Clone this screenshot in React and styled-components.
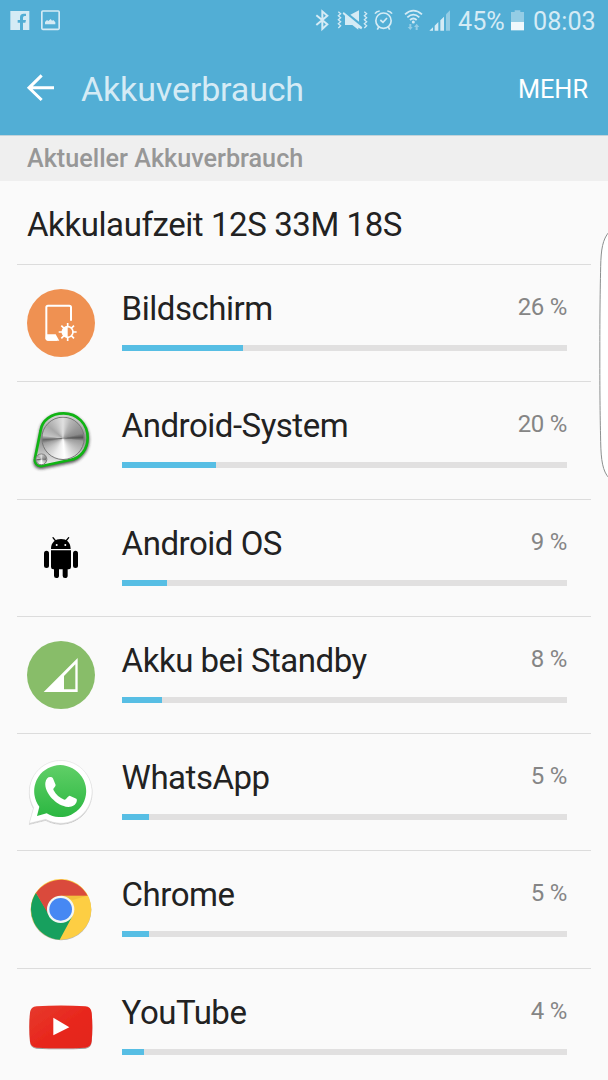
import React from 'react'
import styled, { createGlobalStyle } from 'styled-components'

const rows = [
  { name: 'Bildschirm', percent: 26, bar: 27.1, icon: <DisplayIcon /> },
  { name: 'Android-System', percent: 20, bar: 21.1, icon: <SystemIcon /> },
  { name: 'Android OS', percent: 9, bar: 10.1, icon: <AndroidIcon /> },
  { name: 'Akku bei Standby', percent: 8, bar: 9.1, icon: <StandbyIcon /> },
  { name: 'WhatsApp', percent: 5, bar: 6.1, icon: <WhatsAppIcon /> },
  { name: 'Chrome', percent: 5, bar: 6.1, icon: <ChromeIcon /> },
  { name: 'YouTube', percent: 4, bar: 5.05, icon: <YouTubeIcon /> },
]

export default function App() {
  return (
    <Screen>
      <GlobalStyle />
      <Header>
        <StatusBar>
          <StatusGroup>
            <Glyph $w={20} viewBox="30 24 60 72">
              <path
                d="M31 33H88V90H31ZM60 90H69V68H76L78 60H69V53Q69 48 74 48H78V41H71Q60 41 60 52V60H53V68H60Z"
                fillRule="evenodd"
              />
            </Glyph>
            <Glyph $w={20} $gap={11} viewBox="123 24 60 72">
              <rect x="125.500" y="33" width="52" height="55" rx="3" fill="none" stroke="#d5ebf5" strokeWidth="5" />
              <path d="M135 73V66L141 60L145 63L152 57L156 62L160 60L166 67V73Z" />
            </Glyph>
          </StatusGroup>
          <StatusGroup>
            <Glyph $w={15} viewBox="45 24 45 72">
              <path d="M49 46L82 73L67 87V34L82 47L49 75" fill="none" stroke="#d5ebf5" strokeWidth="6" />
            </Glyph>
            <Glyph $w={33} $gap={6} viewBox="108 24 99 72">
              <path
                d="M115 35L122 41L115 47L122 53L115 59L122 65L115 71L122 77L115 84M193 35L200 41L193 47L200 53L193 59L200 65L193 71L200 77L193 84"
                fill="none" stroke="#d5ebf5" strokeWidth="3.800"
              />
              <path d="M131 36L187 82L184 88L175 83V89L157 75H135V47L128 41ZM151 44L177 31V65Z" />
            </Glyph>
            <Glyph $w={21} $gap={4} viewBox="219 24 63 72">
              <circle cx="250.500" cy="62" r="23" fill="none" stroke="#d5ebf5" strokeWidth="5" />
              <path
                d="M241 60L249 67L261 54M225 41Q229 34 239 33M276 41Q272 34 262 33M236 81L232 89M265 81L269 89"
                fill="none" stroke="#d5ebf5" strokeWidth="5"
              />
            </Glyph>
            <Glyph $w={21} $gap={9} viewBox="309 24 63 72">
              <path d="M315 43Q340 21 366 43M322 52Q340 36 358 52M330 60Q340 51 350 60" fill="none" stroke="#d5ebf5" strokeWidth="5.500" />
              <circle cx="340" cy="66" r="4.500" />
              <path d="M328 72H334V81H338L331 90L323 81H328ZM347 90V81H342L350 71L358 81H353V90Z" opacity="0.5" />
            </Glyph>
            <Glyph $w={24} $gap={4} viewBox="384 24 72 72">
              <path d="M388 92L399 82V92ZM404 77L415 66V92H404ZM421 61L432 50V92H421Z" />
              <path d="M438 43L450 31V92H438Z" opacity="0.5" />
            </Glyph>
            <StatusText $w={48} $gap={6}>45%</StatusText>
            <Glyph $w={17} $gap={3} viewBox="627 24 51 72">
              <path d="M633 36H644V31H661V36H672V66H633Z" opacity="0.5" />
              <path d="M633 66H672V91H633Z" fill="#f0f8fc" />
            </Glyph>
            <StatusText $w={63} $gap={7}>08:03</StatusText>
          </StatusGroup>
        </StatusBar>
        <AppBar>
          <BackIcon viewBox="78 216 90 90">
            <path d="M162 263.500H86M125 226L87 263.500L125 300" fill="none" stroke="#fff" strokeWidth="9" />
          </BackIcon>
          <Title>Akkuverbrauch</Title>
          <MoreButton>MEHR</MoreButton>
        </AppBar>
      </Header>
      <SectionTitle>Aktueller Akkuverbrauch</SectionTitle>
      <Runtime>Akkulaufzeit 12S 33M 18S</Runtime>
      <List>
        {rows.map((row) => (
          <Row key={row.name}>
            {row.icon}
            <Usage>
              <Labels>
                <Name>{row.name}</Name>
                <Percent>{row.percent} %</Percent>
              </Labels>
              <Track>
                <Fill style={{ width: `${row.bar}%` }} />
              </Track>
            </Usage>
          </Row>
        ))}
      </List>
      <EdgeHandle viewBox="327 30 27 750">
        <path
          d="M357 36C338 58 333 88 332 140C330 240 329.500 290 329.500 405C329.500 520 330 570 332 665C333 720 338 754 357 774"
          fill="#fff" stroke="#8c8f8f" strokeWidth="3"
        />
      </EdgeHandle>
    </Screen>
  )
}

function DisplayIcon() {
  return (
    <AppIcon viewBox="51 58 204 204">
      <circle cx="153" cy="160" r="102" fill="#ef9152" />
      <path d="M183 153V113Q183 108 178 108H114Q109 108 109 113V205Q109 210 114 210H141" fill="none" stroke="#fff" strokeWidth="6" />
      <path d="M108 194H137L148 213H114Q107 213 107 206Z" fill="#fff" />
      <path
        d="M173 160V214M146 187H200M154 168L192 206M192 168L154 206"
        stroke="#fff" strokeWidth="5"
      />
      <circle cx="173" cy="187" r="16" fill="#ef9152" stroke="#fff" strokeWidth="5" />
      <path d="M173 171A16 16 0 0 0 173 203Z" fill="#fff" />
    </AppIcon>
  )
}

function SystemIcon() {
  return (
    <AppIcon viewBox="51 50 204 204">
      <defs>
        <filter id="systemShadow" x="-20%" y="-20%" width="140%" height="140%">
          <feGaussianBlur stdDeviation="4.500" />
        </filter>
        <linearGradient id="systemPlate" x1="0" y1="0" x2="0" y2="1">
          <stop offset="0" stopColor="#d9d9d9" />
          <stop offset="0.5" stopColor="#8d8d8d" />
          <stop offset="1" stopColor="#f4f4f4" />
        </linearGradient>
      </defs>
      <path d="M88 123C92 90 123 67 161 67C204 67 238 102 238 145C238 182 214 211 180 217L96 234C79 236 67 222 71 207Z" transform="translate(0 5)" fill="#222" opacity="0.75" filter="url(#systemShadow)" />
      <path
        d="M92 123C96 93 124 72 161 72C202 72 233 104 233 145C233 180 211 207 180 212L96 230C82 232 72 220 75 207Z"
        fill="url(#systemPlate)" stroke="#10b414" strokeWidth="8" strokeLinejoin="round"
      />
      <foreignObject x="94" y="82" width="132" height="132">
        <Knob $size={130} />
      </foreignObject>
      <foreignObject x="76" y="192" width="38" height="38">
        <Knob $size={36} />
      </foreignObject>
    </AppIcon>
  )
}

function AndroidIcon() {
  return (
    <AppIcon viewBox="51 42 204 204">
      <path d="M123 117C123 97 136 87 153 87C170 87 182 97 182 117ZM123 121H183V171Q183 178 176 178H173V197Q173 204 165 204Q158 204 158 197V178H147V197Q147 204 139 204Q132 204 132 197V178H130Q123 178 123 171Z" />
      <rect x="102" y="122" width="15" height="52" rx="7.500" />
      <rect x="189" y="122" width="15" height="52" rx="7.500" />
      <path d="M137 93L129 83M168 93L176 83" stroke="#000" strokeWidth="4" strokeLinecap="round" />
      <circle cx="140" cy="105" r="3" fill="#fff" />
      <circle cx="166" cy="105" r="3" fill="#fff" />
    </AppIcon>
  )
}

function StandbyIcon() {
  return (
    <AppIcon viewBox="51 48 204 204">
      <circle cx="153" cy="150" r="102" fill="#88bd69" />
      <path d="M203 99V201H101ZM196 118L162 153V193H196Z" fill="#fff" fillRule="evenodd" />
    </AppIcon>
  )
}

function WhatsAppIcon() {
  return (
    <AppIcon viewBox="51 39 204 204">
      <defs>
        <linearGradient id="whatsapp" x1="0" y1="0" x2="0" y2="1">
          <stop offset="0" stopColor="#60cf67" />
          <stop offset="1" stopColor="#2bb741" />
        </linearGradient>
        <filter id="softShadow" x="-15%" y="-15%" width="130%" height="130%">
          <feDropShadow dx="0" dy="2" stdDeviation="1.500" floodOpacity="0.4" />
        </filter>
      </defs>
      <path d="M58 235L71 188A94 94 0 1 1 107 223Z" fill="#fff" stroke="#dedede" strokeWidth="1.500" filter="url(#softShadow)" />
      <path d="M81 213L88 185A78 78 0 1 1 110 205Z" fill="url(#whatsapp)" />
      <path
        d="M106 113C108 102 113 96 121 96C126 95 129 98 130 103L137 120C137 125 129 130 130 134C138 149 149 158 163 164C168 165 174 152 179 152L199 161C203 165 199 176 192 181C182 188 170 187 159 182C134 174 103 142 106 113Z"
        fill="#fff"
      />
    </AppIcon>
  )
}

function ChromeIcon() {
  return (
    <AppIcon viewBox="51 46 204 204">
      <circle cx="153" cy="151" r="91" fill="#777" opacity="0.5" />
      <circle cx="153" cy="149" r="91" fill="#fdce43" />
      <path d="M78 99A91 91 0 0 0 149 240L187 170L153 149L118 165Z" fill="#17a05e" />
      <path d="M78 100A91 91 0 0 1 233 108H153L116 165Z" fill="#da4a3c" />
      <path d="M153 108H231L188 121Z" fill="#e0ad34" opacity="0.4" />
      <circle cx="152" cy="149" r="41" fill="#f3f6f3" />
      <circle cx="152" cy="149" r="34" fill="#4688f3" />
    </AppIcon>
  )
}

function YouTubeIcon() {
  return (
    <AppIcon viewBox="51 39 204 204">
      <defs>
        <linearGradient id="youtube" x1="0" y1="0" x2="1" y2="1">
          <stop offset="0" stopColor="#e63a2d" />
          <stop offset="0.5" stopColor="#e8281e" />
          <stop offset="1" stopColor="#e3241d" />
        </linearGradient>
        <filter id="youtubeShadow" x="-10%" y="-10%" width="120%" height="130%">
          <feDropShadow dx="0" dy="3" stdDeviation="2" floodOpacity="0.4" />
        </filter>
      </defs>
      <path
        d="M80 79Q153 74 226 79Q243 80 245 98Q249 141 245 184Q243 202 226 203Q153 207 80 203Q62 202 60 184Q56 141 60 98Q62 80 80 79Z"
        fill="url(#youtube)" filter="url(#youtubeShadow)"
      />
      <path d="M130 113L178 142L130 166Z" fill="#fff" />
    </AppIcon>
  )
}

const GlobalStyle = createGlobalStyle`
  body {
    margin: 0;
    background: #fafafa;
  }
  * {
    box-sizing: border-box;
  }
`;

const Screen = styled.div`
  position: relative;
  width: 608px;
  height: 1080px;
  overflow: hidden;
  background: #fafafa;
  font-family: Roboto, sans-serif;
  color: #222;
`;

const Header = styled.header`
  height: 136px;
  background: #52aed5;
  border-bottom: 1px solid #c3d3da;
`;

const StatusBar = styled.div`
  display: flex;
  justify-content: space-between;
  height: 42px;
  padding: 0 12px 2px 10px;
`;

const StatusGroup = styled.div`
  display: flex;
  align-items: center;
`;

const Glyph = styled.svg`
  flex: none;
  width: ${(p) => p.$w}px;
  height: 24px;
  margin-left: ${(p) => p.$gap || 0}px;
  fill: #d5ebf5;
`;

const StatusText = styled.span`
  width: ${(p) => p.$w}px;
  margin-left: ${(p) => p.$gap}px;
  padding-top: 4px;
  font-size: 25.2px;
  line-height: 30px;
  color: #d5ebf5;
  white-space: nowrap;
`;

const AppBar = styled.div`
  display: flex;
  align-items: center;
  height: 93px;
  padding: 0 20px 0 26px;
`;

const BackIcon = styled.svg`
  width: 30px;
  height: 30px;
  margin-top: -3px;
`;

const Title = styled.h1`
  flex: 1;
  margin: 0 0 0 25px;
  font-size: 34px;
  letter-spacing: -0.15px;
  font-weight: 400;
  line-height: 40px;
  color: #d5ebf5;
`;

const MoreButton = styled.button`
  padding: 2px 0 0;
  border: 0;
  background: none;
  font-family: inherit;
  font-size: 25.3px;
  line-height: 30px;
  color: #fff;
`;

const SectionTitle = styled.h2`
  height: 45px;
  margin: 0;
  padding-left: 27px;
  background: #efefef;
  font-size: 25.2px;
  font-weight: 500;
  line-height: 45px;
  color: #979797;
`;

const Runtime = styled.div`
  height: 83px;
  padding-left: 27px;
  font-size: 33px;
  letter-spacing: -0.42px;
  line-height: 87px;
`;

const List = styled.div`
  padding: 0 17px;
`;

const Row = styled.div`
  display: flex;
  height: 117.3px;
  padding: 24px 24px 0 10px;
  border-top: 1px solid #dcdcdc;
`;

const AppIcon = styled.svg`
  flex: none;
  width: 68px;
  height: 68px;
`;

const Knob = styled.div`
  width: ${(p) => p.$size}px;
  height: ${(p) => p.$size}px;
  border: 3px solid #777;
  border-radius: 50%;
  background: conic-gradient(#e0e0e0, #b4b4b4 25deg, #999 55deg, #8a8a8a 75deg, #555 88deg, #9c9c9c 98deg, #bdbdbd 125deg, #dcdcdc 150deg, #fff 175deg, #eaeaea 205deg, #c5c5c5 235deg, #a0a0a0 255deg, #666 266deg, #c4c4c4 278deg, #a8a8a8 310deg, #c4c4c4 335deg, #e0e0e0);
`;

const Usage = styled.div`
  flex: 1;
  margin-left: 27px;
`;

const Labels = styled.div`
  display: flex;
  justify-content: space-between;
  height: 56px;
`;

const Name = styled.span`
  margin-left: -0.4px;
  font-size: 33px;
  letter-spacing: -0.48px;
  line-height: 39px;
`;

const Percent = styled.span`
  font-size: 24px;
  letter-spacing: -0.3px;
  line-height: 37px;
  color: #858585;
`;

const Track = styled.div`
  height: 6px;
  background: #e1e0e0;
`;

const Fill = styled.div`
  height: 100%;
  background: #57bee4;
`;

const EdgeHandle = styled.svg`
  position: absolute;
  top: 230px;
  right: 0;
  width: 9px;
  height: 250px;
`;
